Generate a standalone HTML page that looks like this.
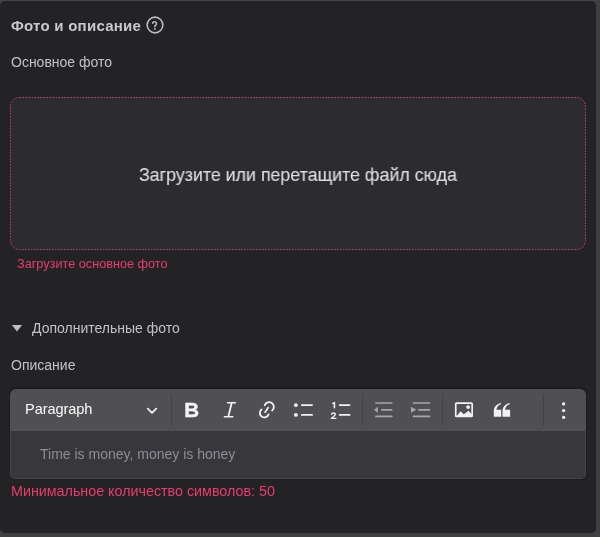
<!DOCTYPE html>
<html><head><meta charset="utf-8">
<style>
*{margin:0;padding:0;box-sizing:border-box}
html,body{width:600px;height:537px;overflow:hidden;background:#3f3f43;font-family:"Liberation Sans",sans-serif}
.card{position:absolute;left:0;top:1px;width:596px;height:532px;background:#232326;border-radius:5px}
.abs{position:absolute;white-space:nowrap;line-height:1;will-change:transform}
.title{left:11px;top:18px;font-size:15px;letter-spacing:0.25px;font-weight:bold;color:#c9c9cd}
.lbl{font-size:14px;color:#c2c2c6}
.upload{position:absolute;left:10px;top:97px;width:576px;height:153px;background:#2c2c2f;border-radius:9.5px}
.uptext{left:139px;top:166px;font-size:18.4px;color:#dcdce0;-webkit-text-stroke:0.15px #dcdce0;transform:scaleX(0.968);transform-origin:0 0}
.err{color:#ea3c6c}
.editor{position:absolute;left:9px;top:387px;width:578px;height:93px;border-radius:6px;background:#1d1d1f}
.tb{position:absolute;left:10px;top:389px;width:576px;height:42px;background:#505053;border-radius:6px 6px 0 0}
.content{position:absolute;left:10px;top:431px;width:576px;height:48px;background:#37373c;border:1px solid #46464b;border-top:none;border-radius:0 0 5px 5px}
.sep{position:absolute;top:394px;width:1px;height:32px;background:#434346}
svg.ov{position:absolute;left:0;top:0}
</style></head><body>
<div style="position:absolute;left:0;top:0;width:600px;height:1px;background:#444448"></div>
<div class="card"></div>
<div class="abs title">Фото и описание</div>
<div class="abs lbl" style="left:10.6px;top:55px">Основное фото</div>
<div class="upload"></div>
<div class="abs uptext">Загрузите или перетащите файл сюда</div>
<div class="abs err" style="left:16.5px;top:257.7px;font-size:12.7px">Загрузите основное фото</div>
<div class="abs lbl" style="left:32px;top:321px">Дополнительные фото</div>
<div class="abs lbl" style="left:11px;top:357.5px">Описание</div>
<div class="editor"></div>
<div class="tb"></div>
<div class="content"></div>
<div class="sep" style="left:171px"></div>
<div class="sep" style="left:362px"></div>
<div class="sep" style="left:442px"></div>
<div class="sep" style="left:543px"></div>
<div class="abs" style="left:24.5px;top:401.8px;font-size:14.6px;color:#fafafc;letter-spacing:-0.1px">Paragraph</div>
<div class="abs" style="left:40px;top:447px;font-size:14px;color:#8d8d95">Time is money, money is honey</div>
<div class="abs err" style="left:11px;top:484px;font-size:14.3px">Минимальное количество символов: 50</div>
<svg class="ov" width="600" height="537" viewBox="0 0 600 537">
  <!-- help icon -->
  <g fill="none" stroke="#bdbdc1" stroke-width="1.6" stroke-linecap="round">
    <circle cx="155" cy="25" r="7.85"/>
    <path d="M152.55 23.35A2 2 0 1 1 155.5 25.4Q154.8 25.9 154.8 26.7" stroke-width="1.5"/>
  </g>
  <circle cx="154.8" cy="28.9" r="0.95" fill="#bdbdc1"/>
  <rect x="10.5" y="97.5" width="575" height="152" rx="9" fill="none" stroke="#4c1a2d" stroke-width="1.6"/>
  <rect x="10.5" y="97.5" width="575" height="152" rx="9" fill="none" stroke="#86606f" stroke-width="1" stroke-dasharray="1.5 1.5"/>
  <!-- triangle -->
  <path d="M11.9 325H22.1L17 331.4Z" fill="#bdbdc6"/>
  <g fill="none" stroke="#f2f2f4" stroke-linecap="round" stroke-linejoin="round">
    <!-- chevron -->
    <path d="M147.8 408.7L152 412.9L156.2 408.7" stroke-width="1.7"/>
    <!-- italic -->
    <path d="M227.6 402.8H235.5M224.4 416.8H232.8" stroke-width="1.45"/><path d="M231.7 403L228.3 416.6" stroke-width="1.8" stroke-linecap="butt"/>
    <!-- link -->
    <path d="M264.7 405.3A4.7 4.7 0 1 1 272.1 410.5" stroke-width="1.8"/>
    <path d="M261.5 409.45A4.5 4.5 0 1 0 268.6 414.4" stroke-width="1.8"/>
    <path d="M265.1 412.2L268.3 407.6" stroke-width="1.7"/>
    <!-- bullets -->
    <path d="M301.8 405.1H312.1M301.8 414.9H312.1" stroke-width="1.7"/>
    <!-- numbered -->
    <path d="M339.6 405.1H349.6M339.6 414.9H349.6" stroke-width="1.7"/>
    <path d="M332.9 403.4L334.4 402.7V407.7" stroke-width="1.6"/>
    <path d="M331.6 414.2C331.8 412.6 335.4 412.6 335.3 414.5C335.2 415.8 332.4 417.2 331.4 418.4H335.8" stroke-width="1.4"/>
  </g>
  <circle cx="295.9" cy="405.1" r="1.95" fill="#f2f2f4"/>
  <circle cx="295.9" cy="414.9" r="1.95" fill="#f2f2f4"/>
  <!-- bold -->
  <text x="184.3" y="417.3" font-family="Liberation Sans" font-weight="bold" font-size="20.6" fill="#f4f4f6" stroke="#f4f4f6" stroke-width="0.4">B</text>
  <!-- outdent / indent (disabled) -->
  <g fill="none" stroke="#a6a6a9" stroke-width="1.7" stroke-linecap="round">
    <path d="M376 403H391.8M381.8 409.8H391.8M376 416.4H391.8"/>
    <path d="M413.5 403H429.4M419 409.8H429.4M413.5 416.4H429.4"/>
  </g>
  <path d="M373.9 409.8L377.9 406.8V412.8Z" fill="#a6a6a9"/>
  <path d="M416.3 409.8L411 406.8V412.8Z" fill="#a6a6a9"/>
  <!-- image -->
  <rect x="455.75" y="403.05" width="16.4" height="13.4" rx="0.8" fill="none" stroke="#f2f2f4" stroke-width="1.7"/>
  <path d="M456.6 416.4L460.5 411.3L463.8 414.3L468.6 410.8L472.2 415V416.5H456.6Z" fill="#f2f2f4"/>
  <circle cx="468.1" cy="407.1" r="1.9" fill="#f2f2f4"/>
  <!-- quote -->
  <path d="M493.8 416.75V411C493.8 407 496.5 404 500.8 402.9L501.1 404.1C498.3 405.2 496.7 407.3 496.4 409.8H501.2V416.75Z" fill="#f2f2f4"/>
  <path d="M502.5 416.75V411C502.5 407 505.2 404 509.5 402.9L509.8 404.1C507 405.2 505.4 407.3 505.1 409.8H510.1V416.75Z" fill="#f2f2f4"/>
  <!-- dots -->
  <circle cx="563.6" cy="403.9" r="1.6" fill="#f2f2f4"/>
  <circle cx="563.6" cy="410.6" r="1.6" fill="#f2f2f4"/>
  <circle cx="563.6" cy="417.3" r="1.6" fill="#f2f2f4"/>
</svg>
</body></html>
